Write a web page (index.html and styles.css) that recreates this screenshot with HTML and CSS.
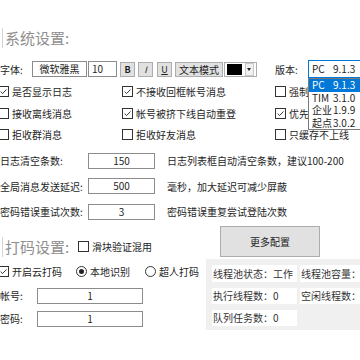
FILE: index.html
```html
<!DOCTYPE html>
<html lang="zh-CN">
<head>
  <meta charset="UTF-8">
  <title>系统设置</title>
  <link rel="stylesheet" href="styles.css">
</head>
<body>
  <div class="frame">
    <div class="section-title">系统设置:</div>

    <div class="font-row">
      <span class="font-label">字体:</span>
      <div class="txt font-name">微软雅黑</div>
      <div class="txt font-size">10</div>
      <div class="tool-btn btn-b">B</div>
      <div class="tool-btn btn-i">I</div>
      <div class="tool-btn btn-u">U</div>
      <div class="tool-btn btn-mode">文本模式</div>
      <div class="color-pick">
        <span class="swatch"></span>
        <span class="arrow-box"><span class="arrow"></span></span>
      </div>
      <span class="version-label">版本:</span>
      <div class="version-wrap">
        <div class="version-select"><span class="v-name">PC</span>9.1.3</div>
        <div class="version-list">
          <div class="v-item active"><span class="v-name">PC</span>9.1.3</div>
          <div class="v-item"><span class="v-name">TIM</span>3.1.0</div>
          <div class="v-item"><span class="v-name">企业</span>1.9.9</div>
          <div class="v-item"><span class="v-name">起点</span>3.0.2</div>
        </div>
      </div>
    </div>

    <div class="checks">
      <label class="check"><span class="cb on"><svg viewBox="0 0 11 11"><path d="M2 5.6l2.4 2.4L9.2 3" /></svg></span>是否显示日志</label>
      <label class="check"><span class="cb on"><svg viewBox="0 0 11 11"><path d="M2 5.6l2.4 2.4L9.2 3" /></svg></span>不接收回框帐号消息</label>
      <label class="check"><span class="cb"></span>强制登录</label>
      <label class="check"><span class="cb"></span>接收离线消息</label>
      <label class="check"><span class="cb on"><svg viewBox="0 0 11 11"><path d="M2 5.6l2.4 2.4L9.2 3" /></svg></span>帐号被挤下线自动重登</label>
      <label class="check"><span class="cb on"><svg viewBox="0 0 11 11"><path d="M2 5.6l2.4 2.4L9.2 3" /></svg></span>优先登录</label>
      <label class="check"><span class="cb"></span>拒收群消息</label>
      <label class="check"><span class="cb"></span>拒收好友消息</label>
      <label class="check"><span class="cb"></span>只缓存不上线</label>
    </div>

    <div class="fields">
      <div class="field-row">
        <span class="field-label">日志清空条数:</span>
        <div class="txt field-input">150</div>
        <span class="field-desc">日志列表框自动清空条数，建议100-200</span>
      </div>
      <div class="field-row">
        <span class="field-label">全局消息发送延迟:</span>
        <div class="txt field-input">500</div>
        <span class="field-desc">毫秒，加大延迟可减少屏蔽</span>
      </div>
      <div class="field-row">
        <span class="field-label">密码错误重试次数:</span>
        <div class="txt field-input">3</div>
        <span class="field-desc">密码错误重复尝试登陆次数</span>
      </div>
    </div>

    <div class="captcha-head">
      <div class="section-title">打码设置:</div>
      <label class="check slide-check"><span class="cb"></span>滑块验证混用</label>
      <div class="more-btn">更多配置</div>
    </div>

    <div class="bottom">
      <div class="captcha-col">
        <div class="mode-row">
          <label class="check mode-cloud"><span class="cb on"><svg viewBox="0 0 11 11"><path d="M2 5.6l2.4 2.4L9.2 3" /></svg></span>开启云打码</label>
          <label class="radio mode-local"><span class="rb on"></span>本地识别</label>
          <label class="radio"><span class="rb"></span>超人打码</label>
        </div>
        <div class="acct-row">
          <span class="acct-label">帐号:</span>
          <div class="txt acct-input">1</div>
        </div>
        <div class="acct-row pwd-row">
          <span class="acct-label">密码:</span>
          <div class="txt acct-input">1</div>
        </div>
      </div>

      <div class="pool">
        <div class="pool-cell">线程池状态：工作</div>
        <div class="pool-cell">线程池容量：</div>
        <div class="pool-cell">执行线程数：0</div>
        <div class="pool-cell">空闲线程数：</div>
        <div class="pool-cell">队列任务数：0</div>
      </div>
    </div>
  </div>
</body>
</html>
```

FILE: styles.css
```css
body {
  margin: 0;
  width: 360px;
  height: 360px;
  overflow: hidden;
  background: #fff;
  font-family: "Noto Sans CJK SC", "Noto Sans", sans-serif;
  font-size: 10px;
  color: #1e1e1e;
}
.frame {
  padding-top: 28px;
}
.section-title {
  height: 20px;
  line-height: 20px;
  margin-left: 2px;
  padding-left: 2px;
  border-left: 1px solid #d4d4d4;
  font-size: 15px;
  color: #8f8f8f;
  white-space: nowrap;
}
.txt {
  box-sizing: border-box;
  height: 16px;
  line-height: 14px;
  border: 1px solid #8c8c8c;
  background: #fff;
  text-align: center;
}

/* font row */
.font-row {
  display: flex;
  align-items: center;
  height: 16px;
  margin-top: 13px;
}
.font-row > * {
  flex-shrink: 0;
}
.font-label {
  width: 32px;
}
.font-name {
  width: 55px;
}
.font-size {
  width: 29px;
  margin-left: 1px;
  text-align: left;
  padding-left: 3px;
}
.tool-btn {
  box-sizing: border-box;
  height: 15px;
  line-height: 13px;
  border: 1px solid #adadad;
  background: #e1e1e1;
  text-align: center;
  font-size: 9px;
}
.btn-b {
  width: 15px;
  margin-left: 3px;
  font-weight: bold;
}
.btn-i {
  width: 15px;
  margin-left: 3px;
  font-style: italic;
}
.btn-u {
  width: 15px;
  margin-left: 4px;
  text-decoration: underline;
}
.btn-mode {
  width: 48px;
  margin-left: 3px;
  font-size: 10px;
}
.color-pick {
  box-sizing: border-box;
  display: flex;
  align-items: center;
  width: 33px;
  height: 15px;
  margin-left: 1px;
  padding: 0 2px;
  border: 1px solid #adadad;
  background: #fff;
}
.swatch {
  width: 17px;
  height: 11px;
  background: #000;
}
.arrow-box {
  display: flex;
  align-items: center;
  justify-content: center;
  width: 8px;
  height: 11px;
  margin-left: 3px;
  border: 1px solid #c8c8c8;
  background: #f0f0f0;
}
.arrow {
  width: 0;
  height: 0;
  border-left: 2.5px solid transparent;
  border-right: 2.5px solid transparent;
  border-top: 3px solid #222;
}
.version-label {
  margin-left: 18px;
  width: 33px;
}
.version-wrap {
  position: relative;
  width: 60px;
}
.version-select {
  box-sizing: border-box;
  height: 18px;
  line-height: 16px;
  padding-left: 3px;
  border: 1px solid #0078d7;
  background: #fff;
  white-space: nowrap;
}
.v-name {
  display: inline-block;
  width: 21px;
}
.version-list {
  position: absolute;
  top: 18px;
  left: 0;
  width: 60px;
  border: 1px solid #7a7a7a;
  background: #fff;
  z-index: 2;
}
.v-item {
  height: 12.5px;
  line-height: 12.5px;
  padding-left: 3px;
  white-space: nowrap;
}
.v-item.active {
  background: #0078d7;
  color: #fff;
}

/* checkboxes */
.checks {
  display: grid;
  grid-template-columns: 124px 153px 1fr;
  grid-auto-rows: 21.5px;
  margin-top: 4px;
  margin-left: -2px;
}
.check, .radio {
  display: flex;
  align-items: center;
  white-space: nowrap;
}
.cb {
  box-sizing: border-box;
  width: 11px;
  height: 11px;
  margin-right: 3px;
  border: 1px solid #333;
  background: #fff;
  flex-shrink: 0;
}
.cb svg {
  display: block;
  width: 9px;
  height: 9px;
}
.cb path {
  fill: none;
  stroke: #222;
  stroke-width: 1.1;
}
.rb {
  box-sizing: border-box;
  position: relative;
  width: 11px;
  height: 11px;
  margin-right: 3px;
  border: 1px solid #333;
  border-radius: 50%;
  background: #fff;
  flex-shrink: 0;
}
.rb.on::after {
  content: "";
  position: absolute;
  left: 2px;
  top: 2px;
  width: 5px;
  height: 5px;
  border-radius: 50%;
  background: #222;
}

/* numeric fields */
.fields {
  display: flex;
  flex-direction: column;
  gap: 9.5px;
  margin-top: 7px;
}
.field-row {
  display: flex;
  align-items: center;
  height: 16px;
}
.field-label {
  width: 88px;
  flex-shrink: 0;
  white-space: nowrap;
}
.field-input {
  width: 67px;
  flex-shrink: 0;
}
.field-desc {
  margin-left: 12px;
  white-space: nowrap;
}

/* captcha */
.captcha-head {
  display: grid;
  grid-template-columns: 78px 142px 100px;
  align-items: end;
  margin-top: 6px;
}
.slide-check {
  height: 20px;
}
.more-btn {
  box-sizing: border-box;
  height: 31px;
  line-height: 29px;
  border: 1px solid #adadad;
  background: #e1e1e1;
  text-align: center;
}
.bottom {
  display: flex;
  margin-top: 2px;
}
.captcha-col {
  width: 208px;
  margin-left: -2px;
  flex-shrink: 0;
}
.mode-row {
  display: flex;
  align-items: center;
  height: 14px;
  margin-top: 6px;
}
.mode-cloud {
  width: 78px;
}
.mode-local {
  width: 69px;
}
.acct-row {
  display: flex;
  align-items: center;
  margin-top: 9px;
}
.pwd-row {
  margin-top: 7px;
}
.acct-label {
  width: 39px;
  padding-left: 2px;
  box-sizing: border-box;
}
.acct-input {
  width: 106px;
}
.pool {
  display: grid;
  grid-template-columns: 85px 70px;
  grid-template-rows: 17px 16px 16px;
  gap: 6px 3px;
  width: 170px;
  padding: 6px 0 4px 6px;
  background: #f0f0f0;
  flex-shrink: 0;
}
.pool-cell {
  background: #fff;
  color: #333;
  padding-left: 1px;
  white-space: nowrap;
  display: flex;
  align-items: center;
}
```
